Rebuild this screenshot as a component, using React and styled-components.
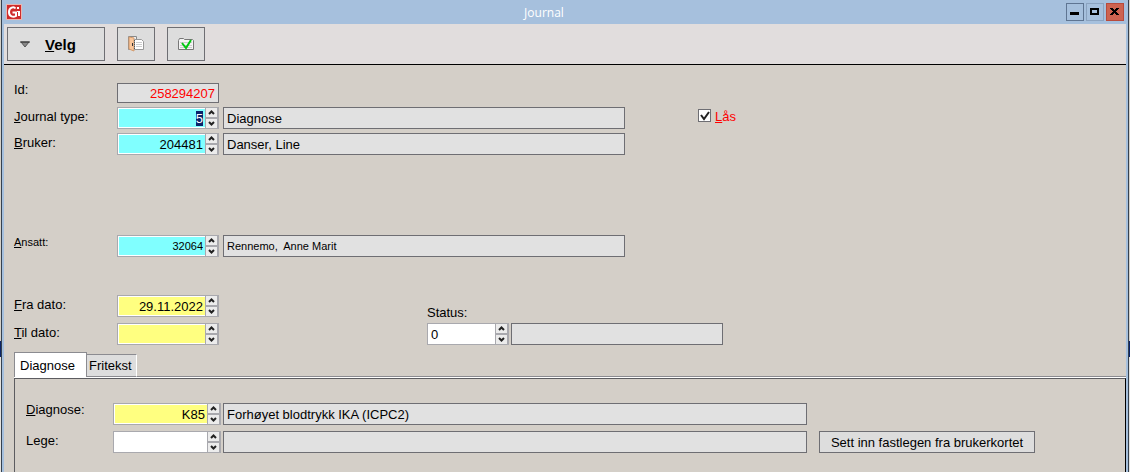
import React, { useEffect, useRef } from "react";
//Styling
import styled, { createGlobalStyle } from "styled-components";

const App = () => {
  const typeRef = useRef(null);
  //Start with the journal type selected
  useEffect(() => {
    typeRef.current.focus();
    typeRef.current.select();
  }, []);

  return (
    <>
      <GlobalStyle />
      <Backdrop>
        <Window>
          <TitleBar>
            <Logo />
            <h1>Journal</h1>
            <WindowButtons>
              <WindowButton aria-label="Minimer" $border="#5f7592">
                <svg width="16" height="16" shapeRendering="crispEdges">
                  <path d="M3 8h9v3H3z" />
                </svg>
              </WindowButton>
              <WindowButton aria-label="Maksimer" $border="#8ba3c0">
                <svg width="16" height="16" shapeRendering="crispEdges">
                  <path d="M3 4h9v7H3zM5 6v3h5V6z" fillRule="evenodd" />
                </svg>
              </WindowButton>
              <WindowButton
                aria-label="Lukk"
                $border="#b84a3c"
                $background="#cd6350"
              >
                <svg width="16" height="16" shapeRendering="crispEdges">
                  <path d="M3 4h3v1h1v1h1v-1h1v-1h3v1h-1v1h-1v1h-1v1h1v1h1v1h1v1H9v-1H8V9H7v1H6v1H3v-1h1V9h1V8h1V7H5V6H4V5H3z" />
                </svg>
              </WindowButton>
            </WindowButtons>
          </TitleBar>
          <Body>
            <Toolbar>
              <MenuButton>
                <svg width="10" height="7">
                  <path d="M1 1h8L5 6z" fill="#888" stroke="#555" />
                  <path d="M0 1h10" stroke="#333" />
                </svg>
                <span>
                  <u>V</u>elg
                </span>
              </MenuButton>
              <IconButton aria-label="Lukk journal">
                <DoorIcon />
              </IconButton>
              <IconButton aria-label="Godkjenn">
                <CheckIcon />
              </IconButton>
            </Toolbar>
            <Form>
              <Group $space={80}>
                <Row>
                  <Label htmlFor="id" $raised>
                    Id:
                  </Label>
                  <IdField id="id" readOnly defaultValue="258294207" />
                </Row>
                <Row>
                  <Label htmlFor="type">
                    <u>J</u>ournal type:
                  </Label>
                  <SpinField
                    id="type"
                    inputRef={typeRef}
                    color="#80ffff"
                    value="5"
                  />
                  <Display aria-label="Journal type navn" value="Diagnose" />
                  <CheckLabel>
                    <CheckBox>
                      <input type="checkbox" defaultChecked />
                      <svg width="13" height="13">
                        <path
                          d="M3 6l3 4 5-7"
                          fill="none"
                          stroke="#222"
                          strokeWidth="2"
                        />
                      </svg>
                    </CheckBox>
                    <span>
                      <u>L</u>ås
                    </span>
                  </CheckLabel>
                </Row>
                <Row>
                  <Label htmlFor="user">
                    <u>B</u>ruker:
                  </Label>
                  <SpinField id="user" color="#80ffff" value="204481" />
                  <Display aria-label="Bruker navn" value="Danser, Line" />
                </Row>
              </Group>
              <Group $space={38}>
                <Row>
                  <Label htmlFor="employee" $raised $small>
                    <u>A</u>nsatt:
                  </Label>
                  <SpinField id="employee" color="#80ffff" value="32064" small />
                  <Display
                    aria-label="Ansatt navn"
                    value="Rennemo,  Anne Marit"
                    small
                  />
                </Row>
              </Group>
              <Dates>
                <Group $gap={6}>
                  <Row>
                    <Label htmlFor="from">
                      <u>F</u>ra dato:
                    </Label>
                    <SpinField id="from" color="#ffff80" value="29.11.2022" />
                  </Row>
                  <Row>
                    <Label htmlFor="to">
                      <u>T</u>il dato:
                    </Label>
                    <SpinField id="to" color="#ffff80" value="" />
                  </Row>
                </Group>
                <Status>
                  <label htmlFor="status">Status:</label>
                  <Row $gap={2}>
                    <SpinField id="status" width={82} align="left" value="0" />
                    <Display aria-label="Status navn" width={212} value="" />
                  </Row>
                </Status>
              </Dates>
            </Form>
            <Tabs>
              <TabList role="tablist">
                <Tab role="tab" aria-selected="true">
                  Diagnose
                </Tab>
                <Tab role="tab" aria-selected="false">
                  Fritekst
                </Tab>
              </TabList>
              <Panel role="tabpanel">
                <Row $gap={2}>
                  <Label htmlFor="diagnose" $width={85} $raised>
                    <u>D</u>iagnose:
                  </Label>
                  <SpinField
                    id="diagnose"
                    width={108}
                    color="#ffff80"
                    value="K85"
                  />
                  <Display
                    aria-label="Diagnose navn"
                    width={584}
                    value="Forhøyet blodtrykk IKA (ICPC2)"
                  />
                </Row>
                <Row $gap={2}>
                  <Label htmlFor="doctor" $width={85}>
                    Lege:
                  </Label>
                  <SpinField id="doctor" width={108} value="" />
                  <Display aria-label="Lege navn" width={584} value="" />
                  <InsertButton>Sett inn fastlegen fra brukerkortet</InsertButton>
                </Row>
              </Panel>
            </Tabs>
          </Body>
        </Window>
      </Backdrop>
    </>
  );
};

//FIELDS
const SpinField = ({ id, inputRef, value, color, width, align, small }) => (
  <Spin $width={width}>
    <SpinInput
      id={id}
      ref={inputRef}
      defaultValue={value}
      $color={color}
      $align={align}
      $small={small}
    />
    <Arrows>
      <button tabIndex={-1} aria-label="Opp">
        <svg width="11" height="9">
          <path d="M3 6l2.500-2.500L8 6" />
        </svg>
      </button>
      <button tabIndex={-1} aria-label="Ned">
        <svg width="11" height="9">
          <path d="M3 3l2.500 2.500L8 3" />
        </svg>
      </button>
    </Arrows>
  </Spin>
);

const Display = ({ value, width, small, ...rest }) => (
  <ReadOnly readOnly defaultValue={value} $width={width} $small={small} {...rest} />
);

//ICONS
const Logo = () => (
  <svg width="16" height="16">
    <rect width="16" height="16" fill="#e9b5b0" />
    <rect x="1" y="1" width="14" height="14" fill="#cf2b2b" />
    <path
      d="M9.500 4.500C8 2.500 3 3 3 8s4.500 5.500 7 4V8.500H6.500"
      fill="none"
      stroke="#fff"
      strokeWidth="2"
    />
    <path d="M11 3h2v2h-2zM11 7h3v1h-3zM12 8h2v4h-2z" fill="#fff" />
  </svg>
);

const DoorIcon = () => (
  <svg width="16" height="16" viewBox="0 0 16 16">
    <path d="M.5.500h8v13h-8z" fill="#eee" stroke="#888" />
    <path d="M1 1l5 1v13l-5-2z" fill="#fbc79b" stroke="#d39a6c" />
    <path d="M4 7h1v3H4z" fill="#333" />
    <path d="M6.500 3.500h7l2 2v8h-9z" fill="#fff" stroke="#999" />
    <path d="M8 6.500h6M8 8.500h6M8 10.500h6" stroke="#ccc" />
    <path d="M6.500 4v10" stroke="#555" strokeDasharray="1 1" />
  </svg>
);

const CheckIcon = () => (
  <svg width="16" height="14" viewBox="0 0 16 14">
    <path
      d="M.5 12.500v-9l1-2h4l1 1h8l1 1v9z"
      fill="#f4f4f4"
      stroke="#777"
    />
    <path d="M2 5.500h12M2 8.500h12M2 10.500h12" stroke="#ccc" />
    <path d="M4 6l4 5 5-8" fill="none" stroke="#00c810" strokeWidth="2" />
  </svg>
);

const GlobalStyle = createGlobalStyle`
  * {
    box-sizing: border-box;
  }
  body {
    margin: 0;
  }
  body, button, input {
    font-family: "Liberation Sans", Arial, sans-serif;
    font-size: 13px;
    color: black;
  }
  button, input {
    margin: 0;
    padding: 0;
    border-radius: 0;
    outline: none;
  }
  button svg {
    display: block;
  }
`;

const Backdrop = styled.div`
  display: flex;
  min-height: 100vh;
  padding: 0 1px;
  background: linear-gradient(
    #d4d0c8 341px,
    #0a246a 341px,
    #0a246a 357px,
    #e4e2de 357px
  );
`;

const Window = styled.div`
  flex: 1;
  display: flex;
  flex-direction: column;
  border: solid #35414f;
  border-width: 0 1px;
  background: #a6c0dd;
`;

const TitleBar = styled.header`
  display: flex;
  align-items: center;
  height: 24px;
  padding: 0 4px;
  h1 {
    flex: 1;
    margin: 0;
    font-family: "Open Sans", sans-serif;
    font-size: 12px;
    font-weight: normal;
    text-align: center;
    color: white;
  }
`;

const WindowButtons = styled.div`
  display: flex;
  gap: 2px;
`;

const WindowButton = styled.button`
  width: 18px;
  height: 18px;
  border: 1px solid ${({ $border }) => $border};
  background: ${({ $background }) => $background || "#a6c0dd"};
`;

const Body = styled.main`
  flex: 1;
  display: flex;
  flex-direction: column;
  margin: 0 2px;
  background: #d4cfc8;
`;

const Toolbar = styled.div`
  display: flex;
  gap: 12px;
  padding: 3px;
  border-bottom: 1px solid black;
  background: #e1dddd;
`;

const ToolButton = styled.button`
  display: flex;
  align-items: center;
  height: 34px;
  border: 1px solid #6e6e73;
  background: #dddddd;
`;

const MenuButton = styled(ToolButton)`
  gap: 15px;
  width: 98px;
  padding-left: 12px;
  font-size: 15px;
  font-weight: bold;
`;

const IconButton = styled(ToolButton)`
  justify-content: center;
  width: 38px;
`;

const Form = styled.form`
  padding: 18px 10px 7px;
`;

const Group = styled.div`
  display: flex;
  flex-direction: column;
  gap: ${({ $gap = 4 }) => $gap}px;
  margin-bottom: ${({ $space = 0 }) => $space}px;
`;

const Row = styled.div`
  display: flex;
  gap: ${({ $gap = 4 }) => $gap}px;
`;

const Label = styled.label`
  flex: none;
  width: ${({ $width = 99 }) => $width}px;
  font-size: ${({ $small }) => ($small ? 11 : 13)}px;
  line-height: ${({ $raised }) => ($raised ? 14 : 20)}px;
`;

const Spin = styled.div`
  flex: none;
  display: flex;
  width: ${({ $width = 102 }) => $width}px;
  height: 22px;
  border: 1px solid #a9a9ae;
  background: #a9a9ae;
`;

const SpinInput = styled.input`
  flex: 1;
  min-width: 0;
  padding: 0 2px;
  border: 1px solid white;
  border-right: none;
  background: ${({ $color = "white" }) => $color};
  font-size: ${({ $small }) => ($small ? 11 : 13)}px;
  text-align: ${({ $align = "right" }) => $align};
  &::selection {
    background: #0a246a;
    color: white;
  }
`;

const Arrows = styled.div`
  display: flex;
  flex-direction: column;
  gap: 2px;
  padding: 0 1px;
  button {
    flex: 1;
    width: 11px;
    border: none;
    background: #ececec;
  }
  path {
    fill: none;
    stroke: #222;
    stroke-width: 2;
  }
`;

const ReadOnly = styled.input`
  flex: 0 1 auto;
  width: ${({ $width = 402 }) => $width}px;
  min-width: 0;
  height: 22px;
  padding: 0 3px;
  border: 1px solid #6e6e73;
  background: #e1e1e1;
  font-size: ${({ $small }) => ($small ? 11 : 13)}px;
`;

const IdField = styled(ReadOnly)`
  flex: none;
  width: 102px;
  height: 20px;
  color: red;
  text-align: right;
`;

const CheckLabel = styled.label`
  display: flex;
  gap: 4px;
  margin: 2px 0 0 69px;
  line-height: 15px;
  color: red;
`;

const CheckBox = styled.span`
  display: grid;
  width: 13px;
  height: 13px;
  input,
  svg {
    grid-area: 1 / 1;
  }
  input {
    appearance: none;
    border: 1px solid #6e6e73;
    background: white;
  }
  svg {
    z-index: 1;
    pointer-events: none;
  }
  input:not(:checked) + svg {
    display: none;
  }
`;

const Dates = styled.div`
  display: flex;
  gap: 208px;
`;

const Status = styled.div`
  display: flex;
  flex-direction: column;
  justify-content: flex-end;
  gap: 2px;
  line-height: 16px;
`;

const Tabs = styled.section`
  flex: 1;
  display: flex;
  flex-direction: column;
  margin-left: 10px;
`;

const TabList = styled.div`
  display: flex;
  align-items: flex-end;
  border-bottom: 1px solid white;
  &::after {
    content: "";
    flex: 1;
    border-bottom: 1px solid #8b8b90;
  }
`;

const Tab = styled.button`
  width: 50px;
  height: 23px;
  padding-left: 2px;
  border: solid #8b8b90;
  border-width: 1px 0;
  border-right: 1px solid white;
  background: #dddddd;
  text-align: left;
  &[aria-selected="true"] {
    width: 73px;
    height: 25px;
    padding-left: 5px;
    border-width: 1px 1px 0;
    border-color: #8b8b90;
    background: white;
  }
`;

const Panel = styled.div`
  flex: 1;
  display: flex;
  flex-direction: column;
  gap: 6px;
  padding: 24px 11px;
  border: solid #5c5c60;
  border-width: 1px 1px 0;
  border-right-color: black;
`;

const InsertButton = styled.button`
  flex: none;
  width: 216px;
  height: 22px;
  margin-left: 10px;
  border: 1px solid #6e6e73;
  background: #dddddd;
`;

export default App;
